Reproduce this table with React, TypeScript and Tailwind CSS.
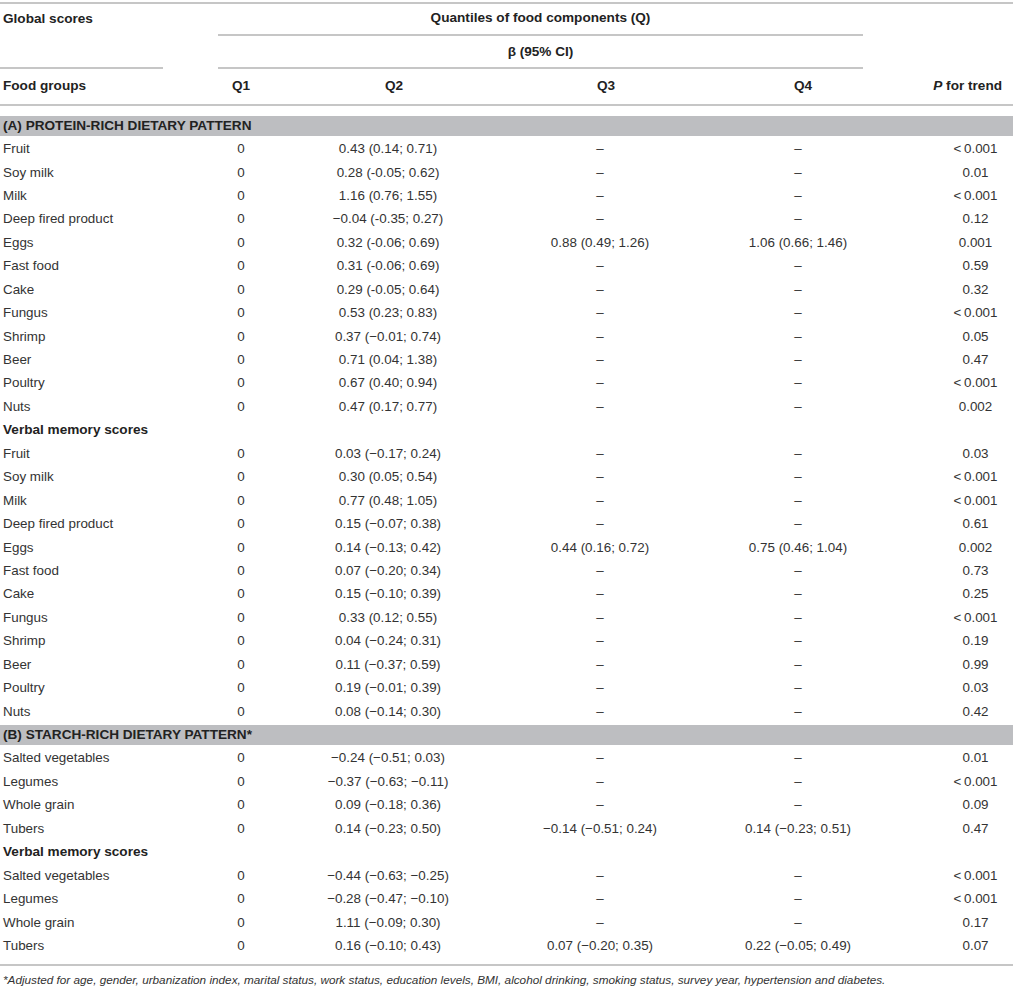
import React from "react";

type Row = [string, string, string, string, string];

const LT = "<\u20090.001";
const D = "–";

const proteinGlobal: Row[] = [
  ["Fruit", "0.43 (0.14; 0.71)", D, D, LT],
  ["Soy milk", "0.28 (-0.05; 0.62)", D, D, "0.01"],
  ["Milk", "1.16 (0.76; 1.55)", D, D, LT],
  ["Deep fired product", "−0.04 (-0.35; 0.27)", D, D, "0.12"],
  ["Eggs", "0.32 (-0.06; 0.69)", "0.88 (0.49; 1.26)", "1.06 (0.66; 1.46)", "0.001"],
  ["Fast food", "0.31 (-0.06; 0.69)", D, D, "0.59"],
  ["Cake", "0.29 (-0.05; 0.64)", D, D, "0.32"],
  ["Fungus", "0.53 (0.23; 0.83)", D, D, LT],
  ["Shrimp", "0.37 (−0.01; 0.74)", D, D, "0.05"],
  ["Beer", "0.71 (0.04; 1.38)", D, D, "0.47"],
  ["Poultry", "0.67 (0.40; 0.94)", D, D, LT],
  ["Nuts", "0.47 (0.17; 0.77)", D, D, "0.002"],
];

const proteinVerbal: Row[] = [
  ["Fruit", "0.03 (−0.17; 0.24)", D, D, "0.03"],
  ["Soy milk", "0.30 (0.05; 0.54)", D, D, LT],
  ["Milk", "0.77 (0.48; 1.05)", D, D, LT],
  ["Deep fired product", "0.15 (−0.07; 0.38)", D, D, "0.61"],
  ["Eggs", "0.14 (−0.13; 0.42)", "0.44 (0.16; 0.72)", "0.75 (0.46; 1.04)", "0.002"],
  ["Fast food", "0.07 (−0.20; 0.34)", D, D, "0.73"],
  ["Cake", "0.15 (−0.10; 0.39)", D, D, "0.25"],
  ["Fungus", "0.33 (0.12; 0.55)", D, D, LT],
  ["Shrimp", "0.04 (−0.24; 0.31)", D, D, "0.19"],
  ["Beer", "0.11 (−0.37; 0.59)", D, D, "0.99"],
  ["Poultry", "0.19 (−0.01; 0.39)", D, D, "0.03"],
  ["Nuts", "0.08 (−0.14; 0.30)", D, D, "0.42"],
];

const starchGlobal: Row[] = [
  ["Salted vegetables", "−0.24 (−0.51; 0.03)", D, D, "0.01"],
  ["Legumes", "−0.37 (−0.63; −0.11)", D, D, LT],
  ["Whole grain", "0.09 (−0.18; 0.36)", D, D, "0.09"],
  ["Tubers", "0.14 (−0.23; 0.50)", "−0.14 (−0.51; 0.24)", "0.14 (−0.23; 0.51)", "0.47"],
];

const starchVerbal: Row[] = [
  ["Salted vegetables", "−0.44 (−0.63; −0.25)", D, D, LT],
  ["Legumes", "−0.28 (−0.47; −0.10)", D, D, LT],
  ["Whole grain", "1.11 (−0.09; 0.30)", D, D, "0.17"],
  ["Tubers", "0.16 (−0.10; 0.43)", "0.07 (−0.20; 0.35)", "0.22 (−0.05; 0.49)", "0.07"],
];

const grid = "grid grid-cols-[200px_82px_212px_212px_184px_123px]";

function DataRow({ row }: { row: Row }) {
  return (
    <div className={`${grid} h-[23.44px] items-center text-[13.4px] text-[#333]`}>
      <div className="pl-[3px] whitespace-nowrap">{row[0]}</div>
      <div className="text-center">0</div>
      <div className="text-center whitespace-nowrap">{row[1]}</div>
      <div className="text-center whitespace-nowrap">{row[2]}</div>
      <div className="text-center whitespace-nowrap">{row[3]}</div>
      <div className="pl-[48px] text-center whitespace-nowrap">{row[4]}</div>
    </div>
  );
}

function SubHeading({ label }: { label: string }) {
  return (
    <div className="flex h-[23.44px] items-center pl-[3px] text-[13.6px] font-bold text-[#222]">
      {label}
    </div>
  );
}

function Band({ label }: { label: string }) {
  return (
    <div className="flex h-[23.44px] flex-col justify-center">
      <div className="flex h-[20px] items-center bg-[#bdbec1] pl-[3px] text-[13.6px] font-bold text-[#222]">
        {label}
      </div>
    </div>
  );
}

export default function App() {
  return (
    <div
      className="w-[1016px] bg-white"
      style={{ fontFamily: '"Liberation Sans", Arial, sans-serif' }}
    >
      <div className="w-[1013px]">
        {/* Table header */}
        <div className="mt-[2px] border-t-2 border-[#c6c6c6]">
          <div className="flex text-[13.6px] font-bold text-[#222]">
            <div className="w-[163px] border-b-2 border-[#c6c6c6]">
              <div className="flex h-[30px] items-center pl-[3px]">Global scores</div>
            </div>
            <div className="w-[55px]" />
            <div className="w-[645px]">
              <div className="flex h-[32px] items-center justify-center border-b-2 border-[#c6c6c6] pb-[2px]">
                Quantiles of food components (Q)
              </div>
              <div className="flex h-[33px] items-center justify-center border-b-2 border-[#c6c6c6] pt-[1px]">
                β (95% CI)
              </div>
            </div>
          </div>
          <div className={`${grid} h-[37px] items-center border-b-2 border-[#c6c6c6] pb-[1px] text-[13.6px] font-bold text-[#222]`}>
            <div className="pl-[3px]">Food groups</div>
            <div className="text-center">Q1</div>
            <div className="pl-3 text-center">Q2</div>
            <div className="pl-3 text-center">Q3</div>
            <div className="pl-[10px] text-center">Q4</div>
            <div className="pr-[11px] text-right">
              <span className="italic">P</span> for trend
            </div>
          </div>
        </div>

        {/* Body */}
        <div className="pt-[8px]">
          <Band label="(A) PROTEIN-RICH DIETARY PATTERN" />
          {proteinGlobal.map((r, i) => (
            <DataRow key={"pg" + i} row={r} />
          ))}
          <SubHeading label="Verbal memory scores" />
          {proteinVerbal.map((r, i) => (
            <DataRow key={"pv" + i} row={r} />
          ))}
          <Band label="(B) STARCH-RICH DIETARY PATTERN*" />
          {starchGlobal.map((r, i) => (
            <DataRow key={"sg" + i} row={r} />
          ))}
          <SubHeading label="Verbal memory scores" />
          {starchVerbal.map((r, i) => (
            <DataRow key={"sv" + i} row={r} />
          ))}
        </div>

        {/* Footnote */}
        <div className="mt-[6px] border-t-2 border-[#c6c6c6] pt-[5px] pl-[3px] text-[11.75px] italic text-[#333] whitespace-nowrap">
          *Adjusted for age, gender, urbanization index, marital status, work status, education levels, BMI, alcohol
          drinking, smoking status, survey year, hypertension and diabetes.
        </div>
      </div>
    </div>
  );
}
